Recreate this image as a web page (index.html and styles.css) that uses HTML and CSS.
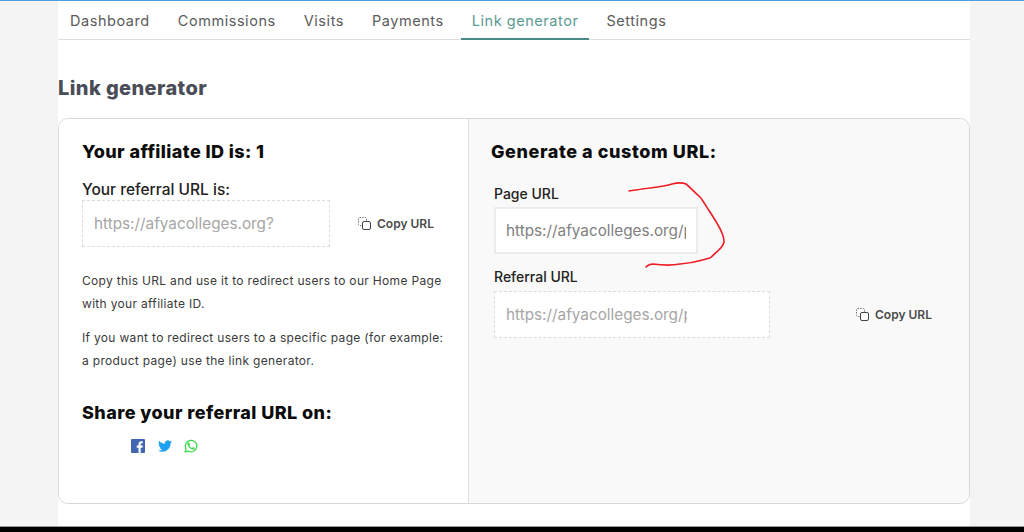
FILE: index.html
```html
<!DOCTYPE html>
<html lang="en">
<head>
<meta charset="utf-8">
<title>Link generator</title>
<link rel="stylesheet" href="styles.css">
</head>
<body>
<div class="topline"></div>
<div class="shell">
  <main class="column">
    <nav class="tabs">
      <a class="tab">Dashboard</a>
      <a class="tab">Commissions</a>
      <a class="tab">Visits</a>
      <a class="tab">Payments</a>
      <a class="tab active">Link generator</a>
      <a class="tab">Settings</a>
    </nav>
    <h1 class="title">Link generator</h1>
    <section class="card">
      <div class="pane left">
        <h2 class="head">Your affiliate ID is: 1</h2>
        <div class="label big">Your referral URL is:</div>
        <div class="row">
          <input class="field dashed wide" readonly value="https://afyacolleges.org?">
          <a class="copy near">
            <svg class="copy-ico" viewBox="0 0 13 13"><rect x="0.5" y="0.5" width="8" height="8" rx="1" class="back"/><rect x="4.5" y="4.5" width="8" height="8" rx="1.5" class="front"/></svg>
            <span>Copy URL</span>
          </a>
        </div>
        <p class="text first">Copy this URL and use it to redirect users to our Home Page with your affiliate ID.</p>
        <p class="text second">If you want to redirect users to a specific page (for example: a product page) use the link generator.</p>
        <h2 class="head share">Share your referral URL on:</h2>
        <div class="social">
          <svg class="soc" viewBox="0 0 14 14"><rect width="14" height="14" rx="1" fill="#4267b2"/><path d="M9.7 14V8.7h1.8l.3-2.1H9.700V5.300c0-.6.2-1 1-1h1.100V2.400c-.2 0-.9-.1-1.600-.1-1.600 0-2.700 1-2.700 2.800v1.500H5.700v2.100h1.800V14z" fill="#fff"/></svg>
          <svg class="soc" viewBox="0 0 24 24"><path fill="#1da1f2" d="M23.950 4.570a10 10 0 0 1-2.820.77 4.960 4.960 0 0 0 2.160-2.720c-.95.550-2 .96-3.130 1.190a4.920 4.920 0 0 0-8.380 4.480C7.690 8.100 4.070 6.130 1.640 3.160a4.820 4.820 0 0 0-.67 2.480c0 1.710.87 3.210 2.190 4.100a4.900 4.900 0 0 1-2.230-.62v.06a4.920 4.920 0 0 0 3.950 4.830 5 5 0 0 1-2.210.08 4.940 4.940 0 0 0 4.600 3.420A9.870 9.870 0 0 1 0 19.540a13.940 13.940 0 0 0 7.550 2.210c9.050 0 14-7.500 14-13.980 0-.21 0-.42-.02-.63a9.940 9.940 0 0 0 2.420-2.570z"/></svg>
          <svg class="soc" viewBox="0 0 24 24"><path fill="none" stroke="#43d854" stroke-width="2.200" d="M2 22l1.500-5.300A9.800 9.800 0 1 1 7.300 20.600z"/><path fill="#43d854" d="M8.900 6.900c-.3 0-.7.100-1 .5-.4.400-1.300 1.300-1.300 3s1.300 3.400 1.500 3.600c.2.200 2.500 4 6.200 5.400 3 1.200 3.200.5 3.700.5.600 0 1.800-.7 2-1.400-1-2-1.800-2.300-2.800-2.800-.4-.2-.6-.2-.9.200l-1 1.200c-.2.200-.4.300-.7.100-1.800-.8-3.400-2.200-4.300-4-.2-.3 0-.5.200-.7l.7-.9c.2-.3.100-.5 0-.7L9.900 7.500c-.2-.5-.6-.6-1-.6z" transform="translate(-.6 -1.200) scale(.96)"/></svg>
        </div>
      </div>
      <div class="pane right">
        <h2 class="head spaced">Generate a custom URL:</h2>
        <div class="group">
          <label class="label" for="page">Page URL</label>
          <input id="page" class="field solid page" readonly value="https://afyacolleges.org/page">
          <label class="label ref" for="ref">Referral URL</label>
          <div class="row apart">
            <input id="ref" class="field dashed long" readonly value="https://afyacolleges.org/page">
            <a class="copy">
              <svg class="copy-ico" viewBox="0 0 13 13"><rect x="0.5" y="0.5" width="8" height="8" rx="1" class="back"/><rect x="4.5" y="4.5" width="8" height="8" rx="1.5" class="front"/></svg>
              <span>Copy URL</span>
            </a>
          </div>
        </div>
        <svg class="scribble" viewBox="0 0 120 100"><path d="M9 16C16 15 22 14 30 13 38 12 46 11 52 9 56 8 61 7 66 9 70 12 73 16 80 22 84 27 87 33 90 37 93 42 96 46 98 50 101 55 104 62 104 67 103 72 100 74 90 83 82 85 75 88 60 89 50 91 40 90 33 89 29 89 27 91 26 92" /></svg>
      </div>
    </section>
  </main>
</div>
<div class="blackbar"></div>
</body>
</html>
```
FILE: styles.css
```css
* { box-sizing: border-box; }
html, body { margin: 0; height: 100%; }
body {
  height: 532px;
  display: flex;
  flex-direction: column;
  overflow: hidden;
  background: #f4f4f4;
  font-family: "Inter", "Liberation Sans", sans-serif;
  color: #333;
}
.topline { height: 1px; background: #4a9fdc; flex: none; }
.shell { flex: 1; min-height: 0; display: flex; padding-left: 58px; }
.column {
  width: 912px;
  background: #fff;
  display: flex;
  flex-direction: column;
}
.tabs {
  height: 39px;
  flex: none;
  display: flex;
  gap: 6px;
  padding-left: 1px;
  border-bottom: 1px solid #ddd;
}
.tab {
  padding: 0 11px;
  display: flex;
  align-items: center;
  height: 39px;
  font-size: 14.500px;
  color: #5b5b5b;
  letter-spacing: 0.55px;
}
.tab.active {
  color: #5b9a93;
  padding-top: 2px;
  border-bottom: 2px solid #4a8a85;
}
.title {
  margin: 36px 0 17px;
  height: 25px;
  line-height: 25px;
  font-size: 20px;
  font-weight: 800;
  letter-spacing: 0.4px;
  color: #4a4d57;
}
.card {
  width: 912px;
  height: 386px;
  flex: none;
  display: flex;
  border: 1px solid #d8d8d8;
  border-radius: 10px;
  overflow: hidden;
}
.pane { min-width: 0; }
.left {
  width: 410px;
  flex: none;
  padding: 22px 0 0 23px;
  border-right: 1px solid #ddd;
  background: #fff;
}
.right {
  flex: 1;
  position: relative;
  padding: 22px 0 0 22px;
  background: #f9f9f9;
}
.head {
  margin: 0;
  height: 22px;
  line-height: 22px;
  font-size: 18px;
  font-weight: 800;
  letter-spacing: 0.4px;
  color: #0c0c0c;
}
.head.spaced { letter-spacing: 0.58px; }
.label {
  display: block;
  font-size: 14px;
  line-height: 20px;
  font-weight: 500;
  color: #222;
}
.label.big { font-size: 15.500px; line-height: 20px; margin-top: 17px; }
.ref { margin-top: 13px; }
.row { display: flex; align-items: center; }
.field {
  height: 47px;
  padding: 0 11px;
  font-family: inherit;
  font-size: 15.300px;
  background: #fff;
  outline: none;
  display: block;
}
.dashed { border: 1px dashed #dcdcdc; color: #a6a6a6; }
.solid { border: 2px solid #ececec; color: #808080; padding: 0 10px; }
.wide { width: 248px; }
.page { width: 204px; margin-top: 3px; }
.long { width: 276px; padding-right: 82px; }
.group { margin: 21px 0 0 3px; }
.copy {
  display: flex;
  align-items: center;
  gap: 6px;
  font-size: 12px;
  font-weight: 600;
  color: #4b4b4b;
}
.near { margin-left: 28px; }
.apart { gap: 86px; margin-top: 4px; }
.copy-ico { width: 13px; height: 13px; flex: none; fill: none; }
.copy-ico .back { stroke: #777; stroke-dasharray: 1.500 1.200; }
.copy-ico .front { stroke: #444; fill: #fff; }
.text {
  width: 362px;
  margin: 0;
  font-size: 12px;
  line-height: 23px;
  letter-spacing: 0.32px;
  color: #3a3a3a;
}
.first { margin-top: 22px; }
.second { margin-top: 11px; }
.share { margin-top: 30px; letter-spacing: 0.42px; }
.social { display: flex; gap: 12.500px; margin: 15px 0 0 49px; }
.soc { width: 14px; height: 14px; flex: none; }
.scribble {
  position: absolute;
  left: 151px;
  top: 56px;
  width: 120px;
  height: 100px;
  fill: none;
  stroke: #ee1c25;
  stroke-width: 1.600;
  stroke-linecap: round;
  stroke-linejoin: round;
}
.blackbar { height: 6px; flex: none; background: #000; border-top: 1px solid #999; }
```
